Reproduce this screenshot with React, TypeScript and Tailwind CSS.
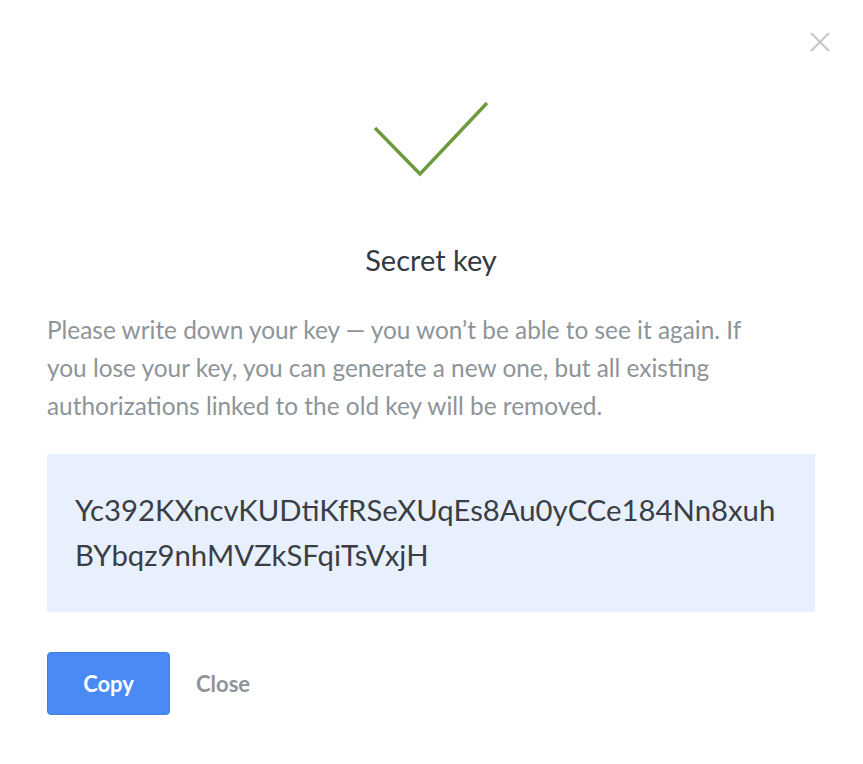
const SECRET = "Yc392KXncvKUDtiKfRSeXUqEs8Au0yCCe184Nn8xuhBYbqz9nhMVZkSFqiTsVxjH";

export default function App() {
  return (
    <div
      className="relative min-h-[764px] bg-white px-[47px] pr-[48px] pt-[100px]"
      style={{ fontFamily: "Lato, 'Noto Sans', sans-serif" }}
    >
      <button
        aria-label="Close"
        className="absolute right-[32px] top-[31px] p-0 text-[#c6cacd]"
      >
        <svg width="22" height="22" viewBox="0 0 22 22" fill="none" stroke="currentColor" strokeWidth="2.4">
          <path d="M2 2 L20 20 M20 2 L2 20" />
        </svg>
      </button>

      <div className="flex justify-center">
        <svg width="120" height="78" viewBox="0 0 120 78" fill="none" className="ml-[-3px]">
          <path d="M5 28 L50 74 L117 3" stroke="#6c9a3c" strokeWidth="3.4" />
        </svg>
      </div>

      <h1 className="mt-[64px] text-center text-[29px] leading-[36px] text-[#34393f]">Secret key</h1>

      <p className="mt-[33px] text-[24.4px] leading-[38px] text-[#8d9499]">
        Please write down your key — you won’t be able to see it again. If
        <br />
        you lose your key, you can generate a new one, but all existing
        <br />
        authorizations linked to the old key will be removed.
      </p>

      <div className="mt-[29px] bg-[#e9f0fd] px-[28px] pt-[33px] pb-[35px] text-[29.3px] leading-[45px] text-[#393e45]">
        {SECRET.slice(0, 42)}
        <br />
        {SECRET.slice(42)}
      </div>

      <div className="mt-[40px] flex items-center gap-[26px]">
        <button className="h-[63px] w-[123px] rounded-[4px] border border-[#3f7fe6] bg-[#4a8af4] text-[22px] font-bold text-white">
          Copy
        </button>
        <button className="text-[22px] font-bold text-[#8e959a]">Close</button>
      </div>
    </div>
  );
}
